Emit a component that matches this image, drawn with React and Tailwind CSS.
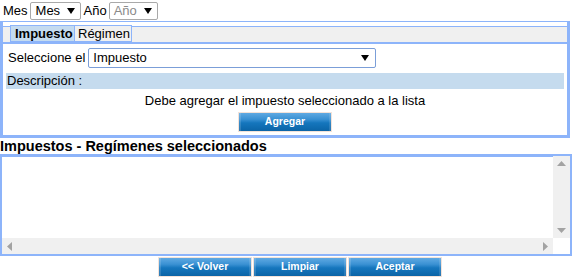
import React from "react";

const Arrow = ({ color = "#000" }) => (
  <svg width="8" height="6" viewBox="0 0 8 6" className="shrink-0">
    <polygon points="0,0 8,0 4,6" fill={color} />
  </svg>
);

const btn =
  "h-[20px] w-[94px] border border-[#f2e2d9] bg-[linear-gradient(to_bottom,#5fa9e2_0%,#3a91d3_35%,#1576bd_55%,#0b64a6_100%)] text-white font-bold text-[10.5px] flex items-center justify-center shadow-[inset_2px_0_0_rgba(255,255,255,0.15),inset_-2px_0_0_rgba(255,255,255,0.12)]";

export default function App() {
  return (
    <div className="w-[572px] h-[278px] bg-white overflow-hidden text-[13px] text-black font-['Liberation_Sans',Arial,sans-serif]">
      {/* top row */}
      <div className="flex items-center h-[21px]">
        <span className="ml-[3px]">Mes</span>
        <div className="ml-[2px] w-[51px] h-[18px] border border-[#a9a9a9] rounded-[2px] flex items-center justify-between pl-[5px] pr-[5px]">
          <span>Mes</span>
          <Arrow />
        </div>
        <span className="ml-[3px]">Año</span>
        <div className="ml-[2px] w-[49px] h-[18px] border border-[#a9a9a9] rounded-[2px] flex items-center justify-between pl-[4px] pr-[5px] text-[#8a8a8a]">
          <span>Año</span>
          <Arrow />
        </div>
      </div>

      {/* panel */}
      <div className="w-[570px] h-[117px] border-x-[3px] border-b-[3px] border-t border-[#8db4fa] flex flex-col">
        <div className="h-[4px]" />
        <div className="h-[18px] border-t border-b-2 border-[#8db4fa] bg-[#f0f0f0] flex items-start pl-[7px]">
          <div className="-mt-[2px] h-[17px] w-[65px] border border-[#8db4fa] bg-[#c4dbf0] font-bold flex items-center pl-[4px] leading-none">
            Impuesto
          </div>
          <div className="-mt-[2px] h-[17px] w-[57px] border border-l-0 border-[#8db4fa] bg-[#f0f0f0] flex items-center pl-[3px] leading-none">
            Régimen
          </div>
        </div>
        <div className="mt-[4px] flex items-center h-[20px]">
          <span className="ml-[5px]">Seleccione el</span>
          <div className="ml-[3px] w-[288px] h-[20px] border border-[#7b9ed8] rounded-[2px] flex items-center justify-between pl-[4px] pr-[6px]">
            <span>Impuesto</span>
            <Arrow />
          </div>
        </div>
        <div className="mt-[5px] mx-[3px] h-[16px] bg-[#c5dbee] flex items-center pl-[1px]">
          Descripción :
        </div>
        <div className="mt-[3px] h-[18px] flex items-center justify-center">
          Debe agregar el impuesto seleccionado a la lista
        </div>
        <div className="mt-[2px] flex justify-center">
          <div className={btn}>Agregar</div>
        </div>
      </div>

      {/* title */}
      <div className="h-[16px] leading-[16px] font-bold text-[14.5px] whitespace-nowrap">
        Impuestos - Regímenes seleccionados
      </div>

      {/* listbox */}
      <div className="w-[572px] h-[102px] border-2 border-[#8db4fa] grid grid-cols-[1fr_17px] grid-rows-[1fr_16px]">
        <div className="bg-white border-t border-[#8db4fa]" />
        <div className="bg-[#f0f0f0] flex flex-col items-center justify-between py-[5px]">
          <svg width="9" height="5" viewBox="0 0 9 5">
            <polygon points="0,5 9,5 4.5,0" fill="#a3a3a3" />
          </svg>
          <svg width="9" height="5" viewBox="0 0 9 5">
            <polygon points="0,0 9,0 4.5,5" fill="#a3a3a3" />
          </svg>
        </div>
        <div className="bg-[#f0f0f0] flex items-center justify-between px-[5px]">
          <svg width="5" height="9" viewBox="0 0 5 9">
            <polygon points="5,0 5,9 0,4.5" fill="#a3a3a3" />
          </svg>
          <svg width="5" height="9" viewBox="0 0 5 9">
            <polygon points="0,0 0,9 5,4.5" fill="#a3a3a3" />
          </svg>
        </div>
        <div className="bg-white" />
      </div>

      {/* bottom buttons */}
      <div className="mt-[1px] flex gap-[1px] pl-[158px]">
        <div className={btn}>&lt;&lt; Volver</div>
        <div className={btn}>Limpiar</div>
        <div className={btn}>Aceptar</div>
      </div>
    </div>
  );
}
